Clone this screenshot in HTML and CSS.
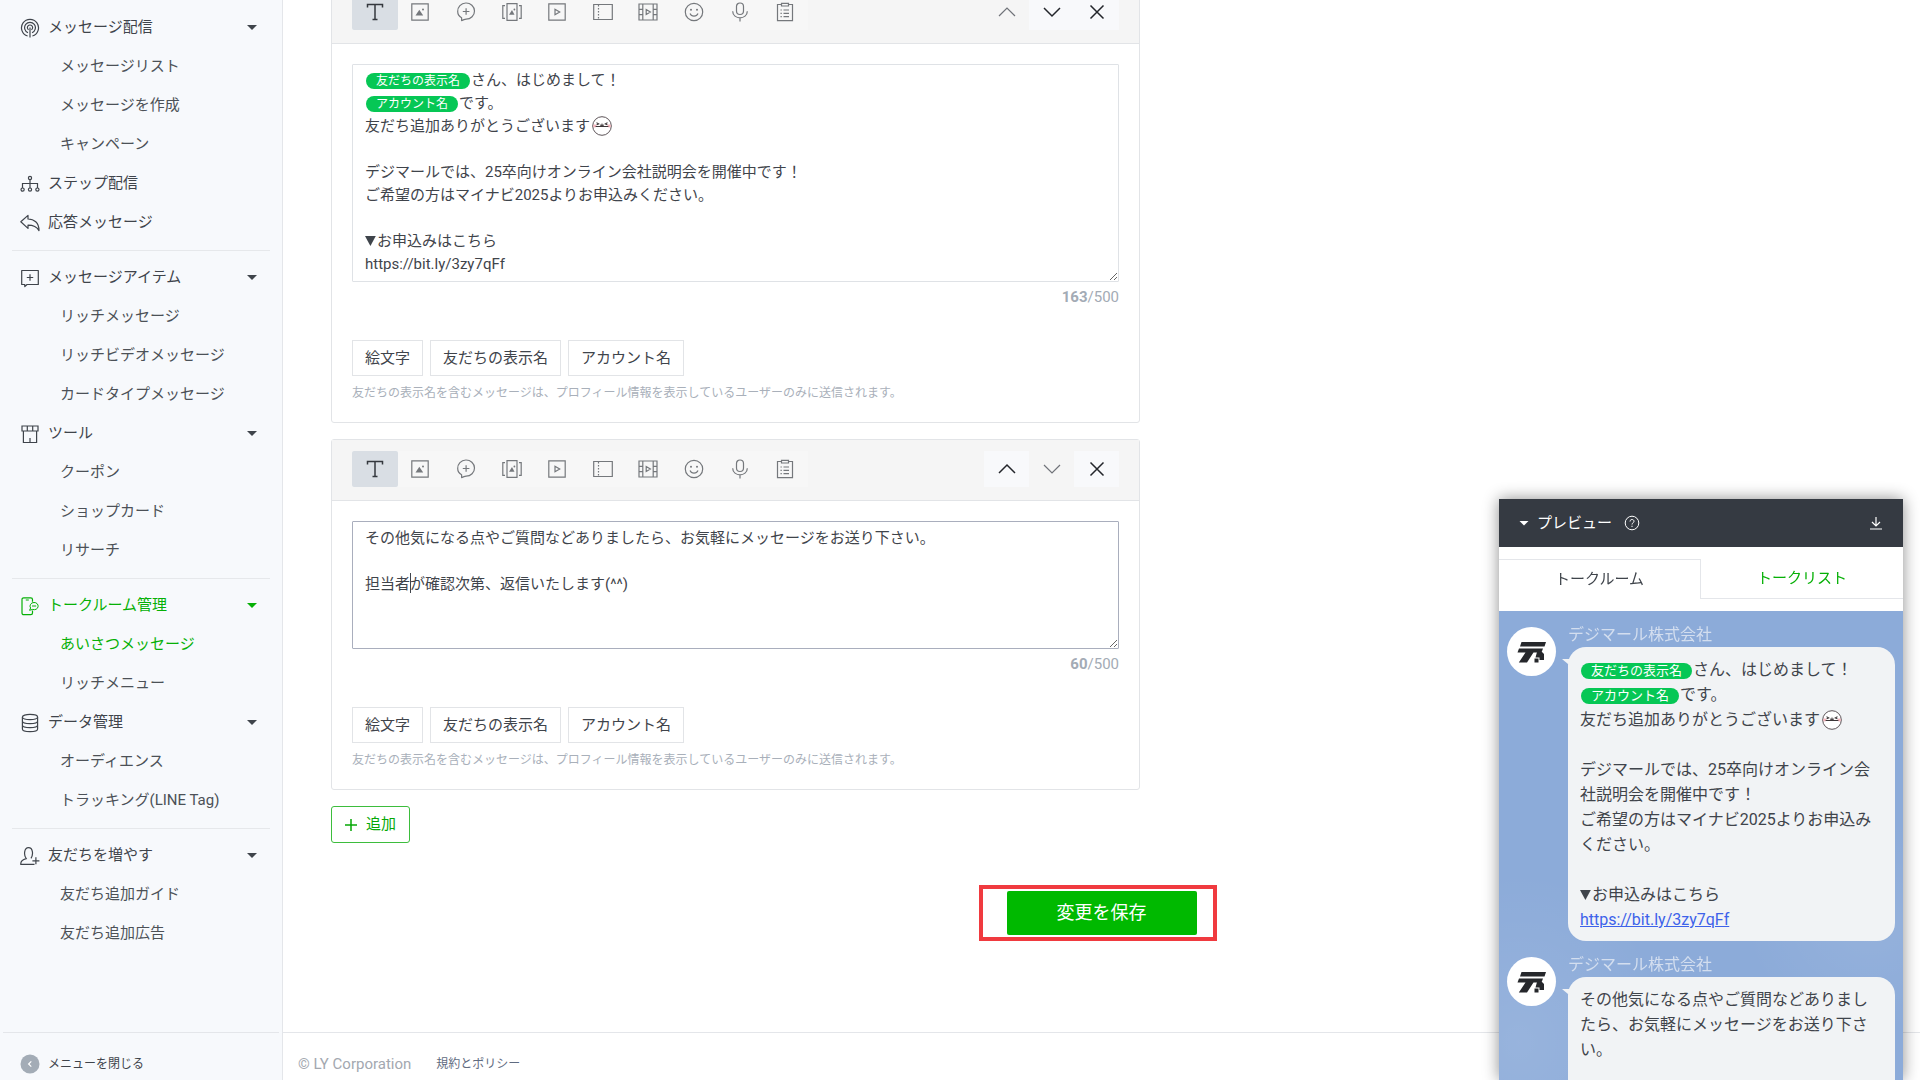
FILE: index.html
```html
<!DOCTYPE html>
<html lang="ja">
<head>
<meta charset="utf-8">
<meta name="viewport" content="width=device-width, initial-scale=1">
<title>あいさつメッセージ</title>
<link rel="stylesheet" href="styles.css">
</head>
<body>
<svg class="sprite" aria-hidden="true">
  <symbol id="i-broadcast" viewBox="0 0 20 20"><path d="M7.600 18A8.500 8.500 0 1 1 12.400 18M8 14.700A5.400 5.400 0 1 1 12 14.700M8.600 11.800A2.600 2.600 0 1 1 11.400 11.800M10 9.500V19.500"/></symbol>
  <symbol id="i-step" viewBox="0 0 20 20"><path d="M10 5.500V14M2.500 14V9.500H17.500V14"/><circle cx="10" cy="4" r="1.600"/><circle cx="2.600" cy="15.600" r="1.600"/><circle cx="10" cy="15.600" r="1.600"/><circle cx="17.400" cy="15.600" r="1.600"/></symbol>
  <symbol id="i-reply" viewBox="0 0 20 20"><path d="M.8 8.800 8 2.400V6C14 6 19 9.600 19 17.600 16.600 13.400 13 12.200 8 12.200V15.400Z" stroke-linejoin="round"/></symbol>
  <symbol id="i-item" viewBox="0 0 20 20"><path d="M1.700 2.500H18.300V16.500H7L4.800 18.700V16.500H1.700ZM10 6.300V12.700M6.800 9.500H13.200" stroke-linejoin="round"/></symbol>
  <symbol id="i-shop" viewBox="0 0 20 20"><path d="M2 2H18V7H2ZM7.300 2V7M12.700 2V7M3.400 7V18.500H16.600V7M10 14V18.500"/></symbol>
  <symbol id="i-talk" viewBox="0 0 20 20"><path d="M12.500 5.800V3.500A1.700 1.700 0 0 0 10.800 1.800H3.700A1.700 1.700 0 0 0 2 3.500V17A1.700 1.700 0 0 0 3.700 18.700H10.800A1.700 1.700 0 0 0 12.500 17V14.500M5.800 4H8.800"/><path d="M14 6.500A3.900 3.600 0 1 1 12.700 13.400L9.600 14.300 10.600 12A3.900 3.600 0 0 1 14 6.500ZM12 10H16.200" stroke-width="1"/></symbol>
  <symbol id="i-data" viewBox="0 0 20 20"><ellipse cx="10" cy="4" rx="7.600" ry="2.700"/><path d="M2.400 4V16C2.400 19.600 17.600 19.600 17.600 16V4M2.400 8C2.400 11.600 17.600 11.600 17.600 8M2.400 12C2.400 15.600 17.600 15.600 17.600 12"/></symbol>
  <symbol id="i-friend" viewBox="0 0 20 20"><path d="M14.500 18.300H.8C.4 14.600 2.500 13.500 6.200 12.600 3.600 9.200 4 1.600 8.500 1.600S13.500 8.500 11 12.300M12.400 14.800H19.400M15.900 11.300V18.300"/></symbol>
  <symbol id="i-text" viewBox="0 0 20 20"><path d="M2.500 5.500V2.500H17.500V5.500M10 2.500V17.500M7.500 17.500H12.500" stroke-width="1.500"/></symbol>
  <symbol id="i-image" viewBox="0 0 20 20"><path d="M1.800 1.800H18.200V18.200H1.800Z"/><path d="M5.500 13.500 9.300 7.700 13.200 13.500Z" fill="currentColor" stroke="none"/><circle cx="13" cy="7.500" r="1" fill="currentColor" stroke="none"/></symbol>
  <symbol id="i-bubble" viewBox="0 0 20 20"><path d="M5.600 18.600V15.700C3 14.300 1.700 12.200 1.700 9.500A8.400 8.100 0 1 1 10.100 17.200C8.500 17.300 7.200 17.800 5.600 18.600ZM10.100 6.200V12.800M6.800 9.500H13.400" stroke-linejoin="round"/></symbol>
  <symbol id="i-cards" viewBox="0 0 20 20"><path d="M5 1.600H15V18.400H5ZM3 3.600H.8V16.400H3M17 3.600H19.200V16.400H17"/><path d="M7 12.800 10 8 12.500 12.800Z" fill="currentColor" stroke="none"/><circle cx="12.400" cy="7.500" r=".9" fill="currentColor" stroke="none"/></symbol>
  <symbol id="i-video" viewBox="0 0 20 20"><path d="M1.800 1.800H18.200V18.200H1.800ZM8 7.300V12.700L12.700 10Z"/></symbol>
  <symbol id="i-coupon" viewBox="0 0 20 20"><path d="M5.500 2.500H19.300V17.500H5.500M5.500 2.500H.7V4.500M.7 4.500V15.500M.7 15.500V17.500H5.500"/><path d="M5.500 3V17.500" stroke-dasharray="1.500 1.500"/></symbol>
  <symbol id="i-film" viewBox="0 0 20 20"><path d="M1 2H19V18H1ZM4.800 2V18M15.200 2V18M1 7.300H4.800M1 12.700H4.800M15.200 7.300H19M15.200 12.700H19M8.200 7.500V12.500L12.400 10Z"/></symbol>
  <symbol id="i-smile" viewBox="0 0 20 20"><circle cx="10" cy="10" r="8.700"/><path d="M6 11.500C7.500 15 12.500 15 14 11.500"/><circle cx="7" cy="7.800" r="1" fill="currentColor" stroke="none"/><circle cx="13" cy="7.800" r="1" fill="currentColor" stroke="none"/></symbol>
  <symbol id="i-mic" viewBox="0 0 20 20"><rect x="6.500" y="1" width="7" height="11.500" rx="3.500"/><path d="M2.700 9.200C2.700 18 17.300 18 17.300 9.200M10 15.800V19.500"/></symbol>
  <symbol id="i-list" viewBox="0 0 20 20"><path d="M6.500 2.500H2.500V18.700H17.500V2.500H13.500M6.500 1.300H13.500V4H6.500ZM8.500 8H14M8.500 11.300H14M8.500 14.600H14M5.500 8H6.800M5.500 11.300H6.800M5.500 14.600H6.800"/></symbol>
  <symbol id="i-up" viewBox="0 0 20 20"><path d="M2 14 10 6 18 14"/></symbol>
  <symbol id="i-down" viewBox="0 0 20 20"><path d="M2 6 10 14 18 6"/></symbol>
  <symbol id="i-close" viewBox="0 0 20 20"><path d="M3.500 3.500 16.500 16.500M16.500 3.500 3.500 16.500"/></symbol>
  <symbol id="i-face" viewBox="0 0 20 20"><circle cx="10" cy="10" r="9.300" fill="#fff" stroke="#4a4044" stroke-width=".9"/><ellipse cx="2.800" cy="10" rx="1.800" ry="1.400" fill="#f3b3bb" stroke="none"/><ellipse cx="17.200" cy="10" rx="1.800" ry="1.400" fill="#f3b3bb" stroke="none"/><path d="M4.500 6.600 6.700 8 4.600 8.800M15.500 6.600 13.300 8 15.400 8.800M3.600 10.500H16.400M8.300 8.800C9 9.800 9.700 9.500 10 8.600 10.300 9.500 11 9.800 11.700 8.800" stroke="#3c3638" stroke-width="1.100"/></symbol>
  <symbol id="i-logo" viewBox="0 0 30 24"><path d="M4.500 2H29L27.500 6.500H3ZM2 8.500H26L24.500 12.500H16.500L10 22.500H1.800L8.500 12.500H.5Z" fill="#25272b" stroke="none"/><path d="M20 12H25L27 14V20H22.500V17.500H18.500ZM17.500 18.500H21.500V22.500H17.500Z" fill="#25272b" stroke="none"/></symbol>
</svg>

<div class="app">
  <aside class="sidebar">
    <nav class="menu" aria-label="メニュー">
      <a class="item" href="#"><svg class="icon"><use href="#i-broadcast"/></svg>メッセージ配信<span class="caret"></span></a>
      <a class="sub" href="#">メッセージリスト</a>
      <a class="sub" href="#">メッセージを作成</a>
      <a class="sub" href="#">キャンペーン</a>
      <a class="item" href="#"><svg class="icon"><use href="#i-step"/></svg>ステップ配信</a>
      <a class="item" href="#"><svg class="icon"><use href="#i-reply"/></svg>応答メッセージ</a>
      <hr>
      <a class="item" href="#"><svg class="icon"><use href="#i-item"/></svg>メッセージアイテム<span class="caret"></span></a>
      <a class="sub" href="#">リッチメッセージ</a>
      <a class="sub" href="#">リッチビデオメッセージ</a>
      <a class="sub" href="#">カードタイプメッセージ</a>
      <a class="item" href="#"><svg class="icon"><use href="#i-shop"/></svg>ツール<span class="caret"></span></a>
      <a class="sub" href="#">クーポン</a>
      <a class="sub" href="#">ショップカード</a>
      <a class="sub" href="#">リサーチ</a>
      <hr>
      <a class="item active" href="#"><svg class="icon"><use href="#i-talk"/></svg>トークルーム管理<span class="caret"></span></a>
      <a class="sub active" href="#" aria-current="page">あいさつメッセージ</a>
      <a class="sub" href="#">リッチメニュー</a>
      <a class="item" href="#"><svg class="icon"><use href="#i-data"/></svg>データ管理<span class="caret"></span></a>
      <a class="sub" href="#">オーディエンス</a>
      <a class="sub" href="#">トラッキング(LINE Tag)</a>
      <hr>
      <a class="item" href="#"><svg class="icon"><use href="#i-friend"/></svg>友だちを増やす<span class="caret"></span></a>
      <a class="sub" href="#">友だち追加ガイド</a>
      <a class="sub" href="#">友だち追加広告</a>
    </nav>
    <button class="collapse" type="button"><svg class="collapse-icon" viewBox="0 0 20 20"><circle cx="10" cy="10" r="9.500" fill="#a3acb6"/><path d="M11.300 7.300 8.600 10 11.300 12.700" stroke="#fff" fill="none" stroke-width="1.200"/></svg>メニューを閉じる</button>
  </aside>

  <main class="main">
    <form class="form">
      <section class="card">
        <header class="toolbar">
          <div class="types">
            <button class="tool selected" type="button" aria-label="テキスト"><svg class="icon"><use href="#i-text"/></svg></button>
            <button class="tool" type="button" aria-label="画像"><svg class="icon"><use href="#i-image"/></svg></button>
            <button class="tool" type="button" aria-label="リッチメッセージ"><svg class="icon"><use href="#i-bubble"/></svg></button>
            <button class="tool" type="button" aria-label="カードタイプ"><svg class="icon"><use href="#i-cards"/></svg></button>
            <button class="tool" type="button" aria-label="動画"><svg class="icon"><use href="#i-video"/></svg></button>
            <button class="tool" type="button" aria-label="クーポン"><svg class="icon"><use href="#i-coupon"/></svg></button>
            <button class="tool" type="button" aria-label="リッチビデオ"><svg class="icon"><use href="#i-film"/></svg></button>
            <button class="tool" type="button" aria-label="スタンプ"><svg class="icon"><use href="#i-smile"/></svg></button>
            <button class="tool" type="button" aria-label="音声"><svg class="icon"><use href="#i-mic"/></svg></button>
            <button class="tool" type="button" aria-label="リサーチ"><svg class="icon"><use href="#i-list"/></svg></button>
          </div>
          <div class="order">
            <button class="move" type="button" aria-label="上へ" disabled><svg class="icon"><use href="#i-up"/></svg></button>
            <button class="move" type="button" aria-label="下へ"><svg class="icon"><use href="#i-down"/></svg></button>
            <button class="move" type="button" aria-label="削除"><svg class="icon"><use href="#i-close"/></svg></button>
          </div>
        </header>
        <div class="card-body">
          <div class="field rich" role="textbox" aria-multiline="true" aria-label="メッセージ1" contenteditable="true" spellcheck="false"><div><span class="tag">友だちの表示名</span>さん、はじめまして！</div><div><span class="tag">アカウント名</span>です。</div><div>友だち追加ありがとうございます<svg class="face"><use href="#i-face"/></svg></div><div><br></div><div>デジマールでは、25卒向けオンライン会社説明会を開催中です！</div><div>ご希望の方はマイナビ2025よりお申込みください。</div><div><br></div><div><span class="mark"></span>お申込みはこちら</div><div>https://bit.ly/3zy7qFf</div></div>
          <p class="count"><b>163</b>/500</p>
          <div class="inserts">
            <button class="insert" type="button">絵文字</button>
            <button class="insert" type="button">友だちの表示名</button>
            <button class="insert" type="button">アカウント名</button>
          </div>
          <p class="hint">友だちの表示名を含むメッセージは、プロフィール情報を表示しているユーザーのみに送信されます。</p>
        </div>
      </section>

      <section class="card">
        <header class="toolbar">
          <div class="types">
            <button class="tool selected" type="button" aria-label="テキスト"><svg class="icon"><use href="#i-text"/></svg></button>
            <button class="tool" type="button" aria-label="画像"><svg class="icon"><use href="#i-image"/></svg></button>
            <button class="tool" type="button" aria-label="リッチメッセージ"><svg class="icon"><use href="#i-bubble"/></svg></button>
            <button class="tool" type="button" aria-label="カードタイプ"><svg class="icon"><use href="#i-cards"/></svg></button>
            <button class="tool" type="button" aria-label="動画"><svg class="icon"><use href="#i-video"/></svg></button>
            <button class="tool" type="button" aria-label="クーポン"><svg class="icon"><use href="#i-coupon"/></svg></button>
            <button class="tool" type="button" aria-label="リッチビデオ"><svg class="icon"><use href="#i-film"/></svg></button>
            <button class="tool" type="button" aria-label="スタンプ"><svg class="icon"><use href="#i-smile"/></svg></button>
            <button class="tool" type="button" aria-label="音声"><svg class="icon"><use href="#i-mic"/></svg></button>
            <button class="tool" type="button" aria-label="リサーチ"><svg class="icon"><use href="#i-list"/></svg></button>
          </div>
          <div class="order">
            <button class="move" type="button" aria-label="上へ"><svg class="icon"><use href="#i-up"/></svg></button>
            <button class="move" type="button" aria-label="下へ" disabled><svg class="icon"><use href="#i-down"/></svg></button>
            <button class="move" type="button" aria-label="削除"><svg class="icon"><use href="#i-close"/></svg></button>
          </div>
        </header>
        <div class="card-body">
          <div class="field-wrap">
            <textarea class="field focused" aria-label="メッセージ2" rows="5" spellcheck="false">その他気になる点やご質問などありましたら、お気軽にメッセージをお送り下さい。

担当者が確認次第、返信いたします(^^)</textarea>
            <span class="text-cursor"></span>
          </div>
          <p class="count"><b>60</b>/500</p>
          <div class="inserts">
            <button class="insert" type="button">絵文字</button>
            <button class="insert" type="button">友だちの表示名</button>
            <button class="insert" type="button">アカウント名</button>
          </div>
          <p class="hint">友だちの表示名を含むメッセージは、プロフィール情報を表示しているユーザーのみに送信されます。</p>
        </div>
      </section>
      <button class="add" type="button"><svg class="plus" viewBox="0 0 12 12"><path d="M6 0V12M0 6H12"/></svg>追加</button>
    </form>
    <div class="save-row">
      <div class="save-wrap">
        <button class="save" type="button">変更を保存</button>
        <span class="frame"></span>
      </div>
    </div>
    <footer class="footer">
      <span class="copyright">© LY Corporation</span>
      <a class="policy" href="#">規約とポリシー</a>
    </footer>
  </main>
</div>

<aside class="preview" aria-label="プレビュー">
  <header class="preview-head">
    <span class="caret"></span>
    <span>プレビュー</span>
    <svg class="help" viewBox="0 0 16 16"><circle cx="8" cy="8" r="6.800"/><path d="M6 6.500C6 3.800 10 3.900 10 6.300 10 7.800 8 7.800 8 9.500M8 10.700V12"/></svg>
    <button class="download" type="button" aria-label="ダウンロード"><svg viewBox="0 0 14 14"><path d="M7 1V10M3 6 7 10 11 6M1 13H13"/></svg></button>
  </header>
  <div class="tabs" role="tablist">
    <button class="tab current" type="button" role="tab" aria-selected="true">トークルーム</button>
    <button class="tab" type="button" role="tab" aria-selected="false">トークリスト</button>
  </div>
  <div class="chat">
    <article class="msg">
      <div class="avatar"><svg><use href="#i-logo"/></svg></div>
      <div class="msg-main">
        <p class="sender">デジマール株式会社</p>
        <div class="bubble"><span class="tag">友だちの表示名</span>さん、はじめまして！<br><span class="tag">アカウント名</span>です。<br>友だち追加ありがとうございます<svg class="face"><use href="#i-face"/></svg><br><br>デジマールでは、25卒向けオンライン会社説明会を開催中です！<br>ご希望の方はマイナビ2025よりお申込みください。<br><br><span class="mark"></span>お申込みはこちら<br><a href="#">https://bit.ly/3zy7qFf</a></div>
      </div>
    </article>
    <article class="msg">
      <div class="avatar"><svg><use href="#i-logo"/></svg></div>
      <div class="msg-main">
        <p class="sender">デジマール株式会社</p>
        <div class="bubble">その他気になる点やご質問などありましたら、お気軽にメッセージをお送り下さい。<br><br><br></div>
      </div>
    </article>
  </div>
</aside>
</body>
</html>
```

FILE: styles.css
```css
* { box-sizing: border-box; }

body {
  margin: 0;
  overflow: hidden;
  background: #fff;
  color: #3f444b;
  font: 15px/23px Roboto, "Noto Sans CJK JP", sans-serif;
}

a { color: inherit; text-decoration: none; }
p { margin: 0; }
button { margin: 0; padding: 0; border: 0; background: none; color: inherit; font: inherit; cursor: pointer; }

.sprite { display: none; }
.icon { flex: none; width: 20px; height: 20px; fill: none; stroke: currentColor; stroke-width: 1.2; }

.caret {
  width: 10px;
  height: 5px;
  background: currentColor;
  clip-path: polygon(0 0, 100% 0, 50% 100%);
}

.app {
  display: grid;
  grid-template-columns: 283px 1fr;
  height: 100vh;
}

/* Sidebar */
.sidebar {
  display: flex;
  flex-direction: column;
  border-right: 1px solid #e4e6ea;
  background: #f7f9fc;
}
.menu { flex: 1; padding: 8px 12px 0; }
.menu hr { margin: 8px 0 7px; border: 0; border-top: 1px solid #e6e8eb; }
.item, .sub { display: flex; align-items: center; height: 39px; }
.item { padding: 0 13px 0 8px; gap: 8px; }
.item .caret { margin-left: auto; }
.sub { padding-left: 48px; color: #4c5157; }
.active { color: #06b006; }
.collapse {
  display: flex;
  align-items: center;
  gap: 8px;
  height: 48px;
  margin: 0 3px;
  padding: 15px 17px 0;
  border-top: 1px solid #e4e6ea;
  font-size: 12px;
}
.collapse-icon { width: 20px; height: 20px; }

/* Editor */
.main { display: flex; flex-direction: column; min-width: 0; }
.form {
  display: flex;
  flex-direction: column;
  align-items: flex-start;
  gap: 16px;
  width: 100%;
  max-width: 857px;
  margin-top: -18px;
  padding-left: 48px;
}
.card { width: 100%; border: 1px solid #e2e4e7; border-radius: 3px; }
.toolbar {
  display: flex;
  justify-content: space-between;
  padding: 11px 20px 13px;
  border-bottom: 1px solid #e2e4e7;
  background: #f5f5f5;
}
.types { display: grid; grid-template-columns: repeat(10, 1fr); width: 456px; background: #f7f7f7; }
.tool, .move { display: flex; align-items: center; justify-content: center; height: 36px; color: #75787c; }
.tool.selected { border-radius: 2px; background: #d9dee4; color: #34383e; }
.order { display: grid; grid-template-columns: repeat(3, 45px); }
.move { background: #f8f9fb; color: #23262b; }
.move .icon { stroke-width: 1.5; }
.move:disabled { background: none; color: #707379; }
.move:disabled .icon { stroke-width: 1.2; }

.card-body { padding: 20px 20px 17px; }
.field-wrap { position: relative; }
.field {
  display: block;
  width: 100%;
  margin: 0;
  padding: 5px 12px;
  border: 1px solid #dfe2e6;
  border-radius: 1px;
  outline: 0;
  overflow: auto;
  resize: vertical;
  background: #fff;
  color: inherit;
  font: inherit;
}
.field.rich { height: 218px; padding: 4px 12px; }
.field.focused { height: 128px; border-color: #a9aebd; }
.text-cursor { position: absolute; top: 52px; left: 58px; width: 1px; height: 20px; background: #3f444b; }

.tag {
  display: inline-block;
  margin: 0 1px;
  padding: 0 10px;
  border-radius: 8px;
  background: #06c755;
  color: #fff;
  font-size: 12px;
  line-height: 16px;
}
.face { width: 20px; height: 20px; margin-left: 2px; vertical-align: -5px; fill: none; }
.mark {
  display: inline-block;
  width: 12px;
  height: 10px;
  background: currentColor;
  clip-path: polygon(0 0, 90% 0, 45% 100%);
}

.count { margin-top: 4px; text-align: right; color: #a3abb5; }
.inserts { display: flex; gap: 7px; margin-top: 31px; }
.insert { height: 36px; padding: 0 12px; border: 1px solid #e2e4e7; }
.hint { margin-top: 6px; color: #a9b0ba; font-size: 12px; }

.add {
  display: flex;
  align-items: center;
  gap: 9px;
  height: 37px;
  padding: 0 13px;
  border: 1px solid #3dbd3d;
  border-radius: 3px;
  color: #06a806;
}
.plus { width: 12px; height: 12px; fill: none; stroke: currentColor; stroke-width: 1.5; }

.save-row { display: flex; justify-content: center; margin-top: 48px; }
.save-wrap { position: relative; }
.save {
  display: block;
  height: 44px;
  padding: 0 50px 2px;
  border-radius: 2px;
  background: #00b900;
  color: #fff;
  font-size: 18px;
}
.frame { position: absolute; inset: -6px -20px -6px -28px; border: 4px solid #f03a3f; pointer-events: none; }

.footer {
  display: flex;
  align-items: center;
  gap: 25px;
  height: 48px;
  margin-top: auto;
  padding: 15px 15px 0;
  border-top: 1px solid #e4e6ea;
}
.copyright { color: #a3a8b0; }
.policy { color: #5f6b80; font-size: 12px; }

/* Preview */
.preview {
  position: fixed;
  right: 17px;
  bottom: 0;
  display: flex;
  flex-direction: column;
  width: 404px;
  height: 581px;
  overflow: clip;
  overflow-clip-margin: 30px;
  border-radius: 2px 2px 0 0;
  background: #fff;
  box-shadow: 0 0 16px rgba(0, 0, 0, .45);
  font-size: 16px;
  line-height: 25px;
}
.preview-head {
  display: flex;
  flex: none;
  align-items: center;
  height: 48px;
  padding: 0 20px;
  background: #353a42;
  color: #fff;
  font-size: 15px;
}
.preview-head .caret { margin-right: 8px; }
.help { width: 16px; height: 16px; margin-left: 12px; fill: none; stroke: #fff; }
.download { margin-left: auto; }
.download svg { display: block; width: 14px; height: 14px; fill: none; stroke: #fff; stroke-width: 1.2; }
.tabs { display: grid; flex: none; grid-template-columns: 1fr 1fr; padding: 12px 0; }
.tab { height: 40px; border-bottom: 1px solid #e4e6ea; color: #06b006; font-size: 15px; }
.tab.current { border: solid #e4e6ea; border-width: 1px 1px 0 0; color: #3f444b; }

.chat {
  display: flex;
  flex: 1;
  flex-direction: column;
  gap: 11px;
  min-height: 0;
  padding: 11px 8px;
  overflow: hidden;
  background:
    radial-gradient(ellipse at 92% 67%, rgba(255, 255, 255, .08), transparent 24%),
    radial-gradient(ellipse at 5% 92%, rgba(255, 255, 255, .1), transparent 28%),
    #8cabd9;
}
.msg { display: flex; flex: none; gap: 12px; }
.avatar {
  display: flex;
  flex: none;
  align-items: center;
  justify-content: center;
  width: 49px;
  height: 49px;
  margin-top: 5px;
  border-radius: 50%;
  background: #fff;
}
.avatar svg { width: 30px; height: 24px; }
.msg-main { flex: 1; min-width: 0; }
.sender { color: #d3deef; }
.bubble {
  position: relative;
  padding: 10px 16px 9px 12px;
  border-radius: 18px;
  background: #f1f3f5;
}
.bubble::before {
  content: "";
  position: absolute;
  top: 12px;
  left: -6px;
  width: 12px;
  height: 10px;
  background: inherit;
  clip-path: polygon(0 0, 100% 0, 100% 100%);
}
.bubble .tag { font-size: 13px; }
.bubble a { color: #3d62ea; text-decoration: underline; }
```
